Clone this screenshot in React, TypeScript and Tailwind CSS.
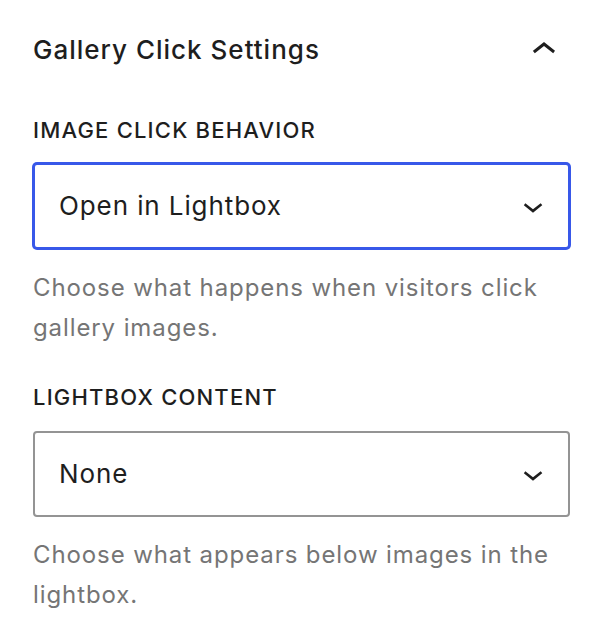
import React from "react";

function ChevronUp() {
  return (
    <svg width="48" height="48" viewBox="0 0 24 24" className="fill-[#1e1e1e]" aria-hidden="true">
      <path d="M6.5 12.4L12 8l5.5 4.4-.9 1.2L12 10l-4.6 3.6-1-1.2z" />
    </svg>
  );
}

function ChevronDown() {
  return (
    <svg width="40" height="40" viewBox="0 0 24 24" className="fill-[#1e1e1e]" aria-hidden="true">
      <path d="M17.5 11.6L12 16l-5.5-4.4.9-1.2L12 14l4.6-3.6 1 1.2z" />
    </svg>
  );
}

function Select({ value, focused }: { value: string; focused?: boolean }) {
  return (
    <div
      className={
        focused
          ? "mt-[21px] flex h-[86px] items-center justify-between rounded-[4px] border-2 border-[#3858e9] bg-white pl-[24px] pr-[15px] shadow-[0_0_0_1px_#3858e9]"
          : "mt-[22px] flex h-[86px] items-center justify-between rounded-[4px] border-2 border-[#949494] bg-white pl-[24px] pr-[15px]"
      }
    >
      <span className="text-[26px] leading-[32px] tracking-[0.9px] text-[#1e1e1e]">{value}</span>
      <ChevronDown />
    </div>
  );
}

export default function App() {
  return (
    <div
      className="min-h-[643px] w-[600px] bg-white pl-[33px] pr-[30px] pt-[34px]"
      style={{ fontFamily: "Inter, 'Noto Sans', 'Liberation Sans', sans-serif" }}
    >
      <div className="flex h-[32px] items-center justify-between">
        <h2 className="text-[26px] font-medium leading-[32px] tracking-[1px] text-[#1e1e1e]">Gallery Click Settings</h2>
        <div className="mr-[2px] flex h-[48px] w-[48px] items-center justify-center">
          <ChevronUp />
        </div>
      </div>

      <div className="mt-[52px] text-[22px] font-medium uppercase leading-[24px] tracking-[1.2px] text-[#1e1e1e]">
        Image click behavior
      </div>
      <Select value="Open in Lightbox" focused />
      <p className="mt-[19px] text-[24px] leading-[40px] tracking-[0.9px] text-[#757575]">
        Choose what happens when visitors click gallery images.
      </p>

      <div className="mt-[37px] text-[22px] font-medium uppercase leading-[24px] tracking-[1.2px] text-[#1e1e1e]">
        Lightbox content
      </div>
      <Select value="None" />
      <p className="mt-[18px] text-[24px] leading-[40px] tracking-[0.9px] text-[#757575]">
        Choose what appears below images in the lightbox.
      </p>
    </div>
  );
}
